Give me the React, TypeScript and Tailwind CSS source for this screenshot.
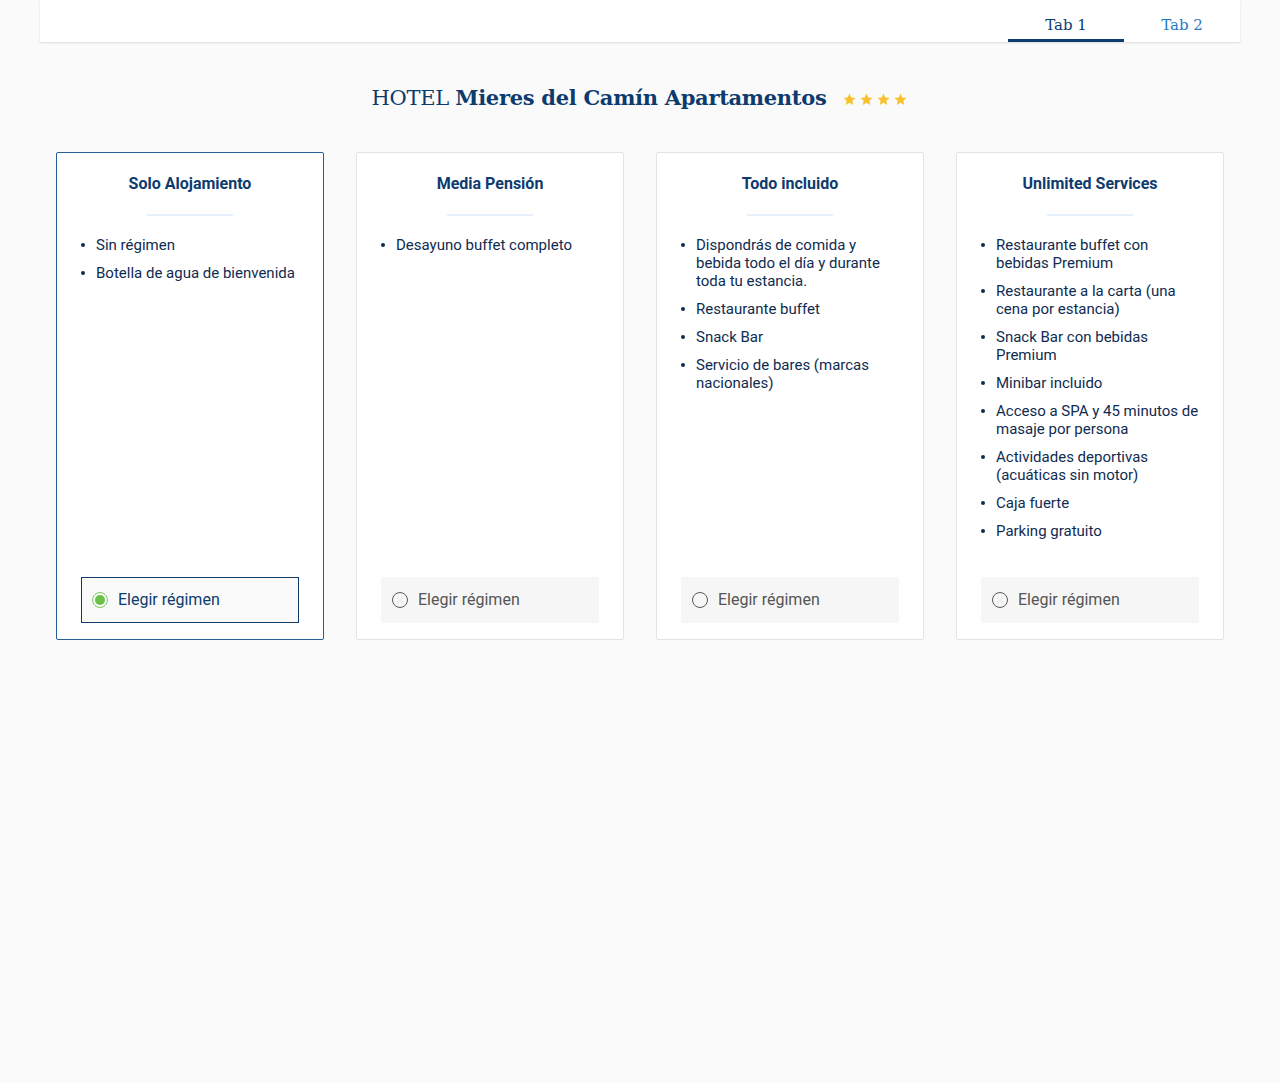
const plans = [
  {
    title: "Solo Alojamiento",
    items: ["Sin régimen", "Botella de agua de bienvenida"],
  },
  {
    title: "Media Pensión",
    items: ["Desayuno buffet completo"],
  },
  {
    title: "Todo incluido",
    items: [
      "Dispondrás de comida y bebida todo el día y durante toda tu estancia.",
      "Restaurante buffet",
      "Snack Bar",
      "Servicio de bares (marcas nacionales)",
    ],
  },
  {
    title: "Unlimited Services",
    items: [
      "Restaurante buffet con bebidas Premium",
      "Restaurante a la carta (una cena por estancia)",
      "Snack Bar con bebidas Premium",
      "Minibar incluido",
      "Acceso a SPA y 45 minutos de masaje por persona",
      "Actividades deportivas (acuáticas sin motor)",
      "Caja fuerte",
      "Parking gratuito",
    ],
  },
];

function Star() {
  return (
    <svg viewBox="0 0 24 24" className="w-[15px] h-[15px]" fill="#f9c12e">
      <path d="M12 2.5l2.9 6.1 6.6.8-4.9 4.6 1.3 6.6L12 17.3l-5.9 3.3 1.3-6.6-4.9-4.6 6.6-.8z" />
    </svg>
  );
}

function PlanCard({
  title,
  items,
  selected,
}: {
  title: string;
  items: string[];
  selected: boolean;
}) {
  return (
    <div
      className={
        selected
          ? "flex flex-col h-[488px] bg-white border border-[#2a5f93] rounded-[2px] px-6 pt-[21px] pb-4"
          : "flex flex-col h-[488px] bg-white border border-[#e3e3e3] rounded-[2px] px-6 pt-[21px] pb-4"
      }
    >
      <h3 className="text-center text-base leading-5 font-bold text-[#0d3b6e]">{title}</h3>
      <div className="mx-auto mt-5 w-[86px] h-[2px] bg-[#e6f0fa]" />
      <ul className="mt-5 flex flex-col gap-[10px] text-[15px] leading-[18px] text-[#0f2b50]">
        {items.map((item) => (
          <li key={item} className="flex">
            <span className="w-[15px] shrink-0 pt-[7px]">
              <span className="block w-[4px] h-[4px] rounded-full bg-[#0f2b50]" />
            </span>
            <span>{item}</span>
          </li>
        ))}
      </ul>
      <div className="flex-1" />
      <button
        className={
          selected
            ? "flex items-center h-[46px] w-full px-[10px] gap-[10px] border border-[#0d3b6e] bg-[#fafafa] text-base text-[#0d3b6e]"
            : "flex items-center h-[46px] w-full px-[10px] gap-[10px] border border-transparent bg-[#f6f6f6] text-base text-[#555555]"
        }
      >
        {selected ? (
          <span className="flex items-center justify-center w-4 h-4 rounded-full border border-[#7ac95a]">
            <span className="w-[10px] h-[10px] rounded-full bg-[#6cc04a]" />
          </span>
        ) : (
          <span className="w-4 h-4 rounded-full border border-[#5a5a5a]" />
        )}
        <span>Elegir régimen</span>
      </button>
    </div>
  );
}

export default function App() {
  return (
    <div className="min-h-[1083px] bg-[#fafafa] font-['Roboto',sans-serif]">
      <div className="px-10">
        <header className="flex justify-end h-[42px] bg-white shadow-[0_1px_2px_rgba(0,0,0,0.12)]">
          <nav className="flex font-['DejaVu_Serif',serif] text-[15px]">
            <div className="w-[116px] flex items-center justify-center border-b-[3px] border-[#0d3b6e] text-[#0d3b6e] pt-[11px]">
              Tab 1
            </div>
            <div className="w-[116px] flex items-center justify-center border-b-[3px] border-transparent text-[#1f7cc7] pt-[11px]">
              Tab 2
            </div>
          </nav>
        </header>
      </div>

      <div className="flex items-center justify-center gap-4 mt-[40px] h-[32px]">
        <h1 className="font-['DejaVu_Serif',serif] text-[21px] tracking-[-0.3px] text-[#0d3b6e]">
          HOTEL <span className="font-bold">Mieres del Camín Apartamentos</span>
        </h1>
        <div className="flex gap-[2px] mt-[2px]">
          <Star />
          <Star />
          <Star />
          <Star />
        </div>
      </div>

      <div className="grid grid-cols-4 gap-8 px-14 mt-[38px]">
        {plans.map((p, i) => (
          <PlanCard key={p.title} title={p.title} items={p.items} selected={i === 0} />
        ))}
      </div>
    </div>
  );
}
